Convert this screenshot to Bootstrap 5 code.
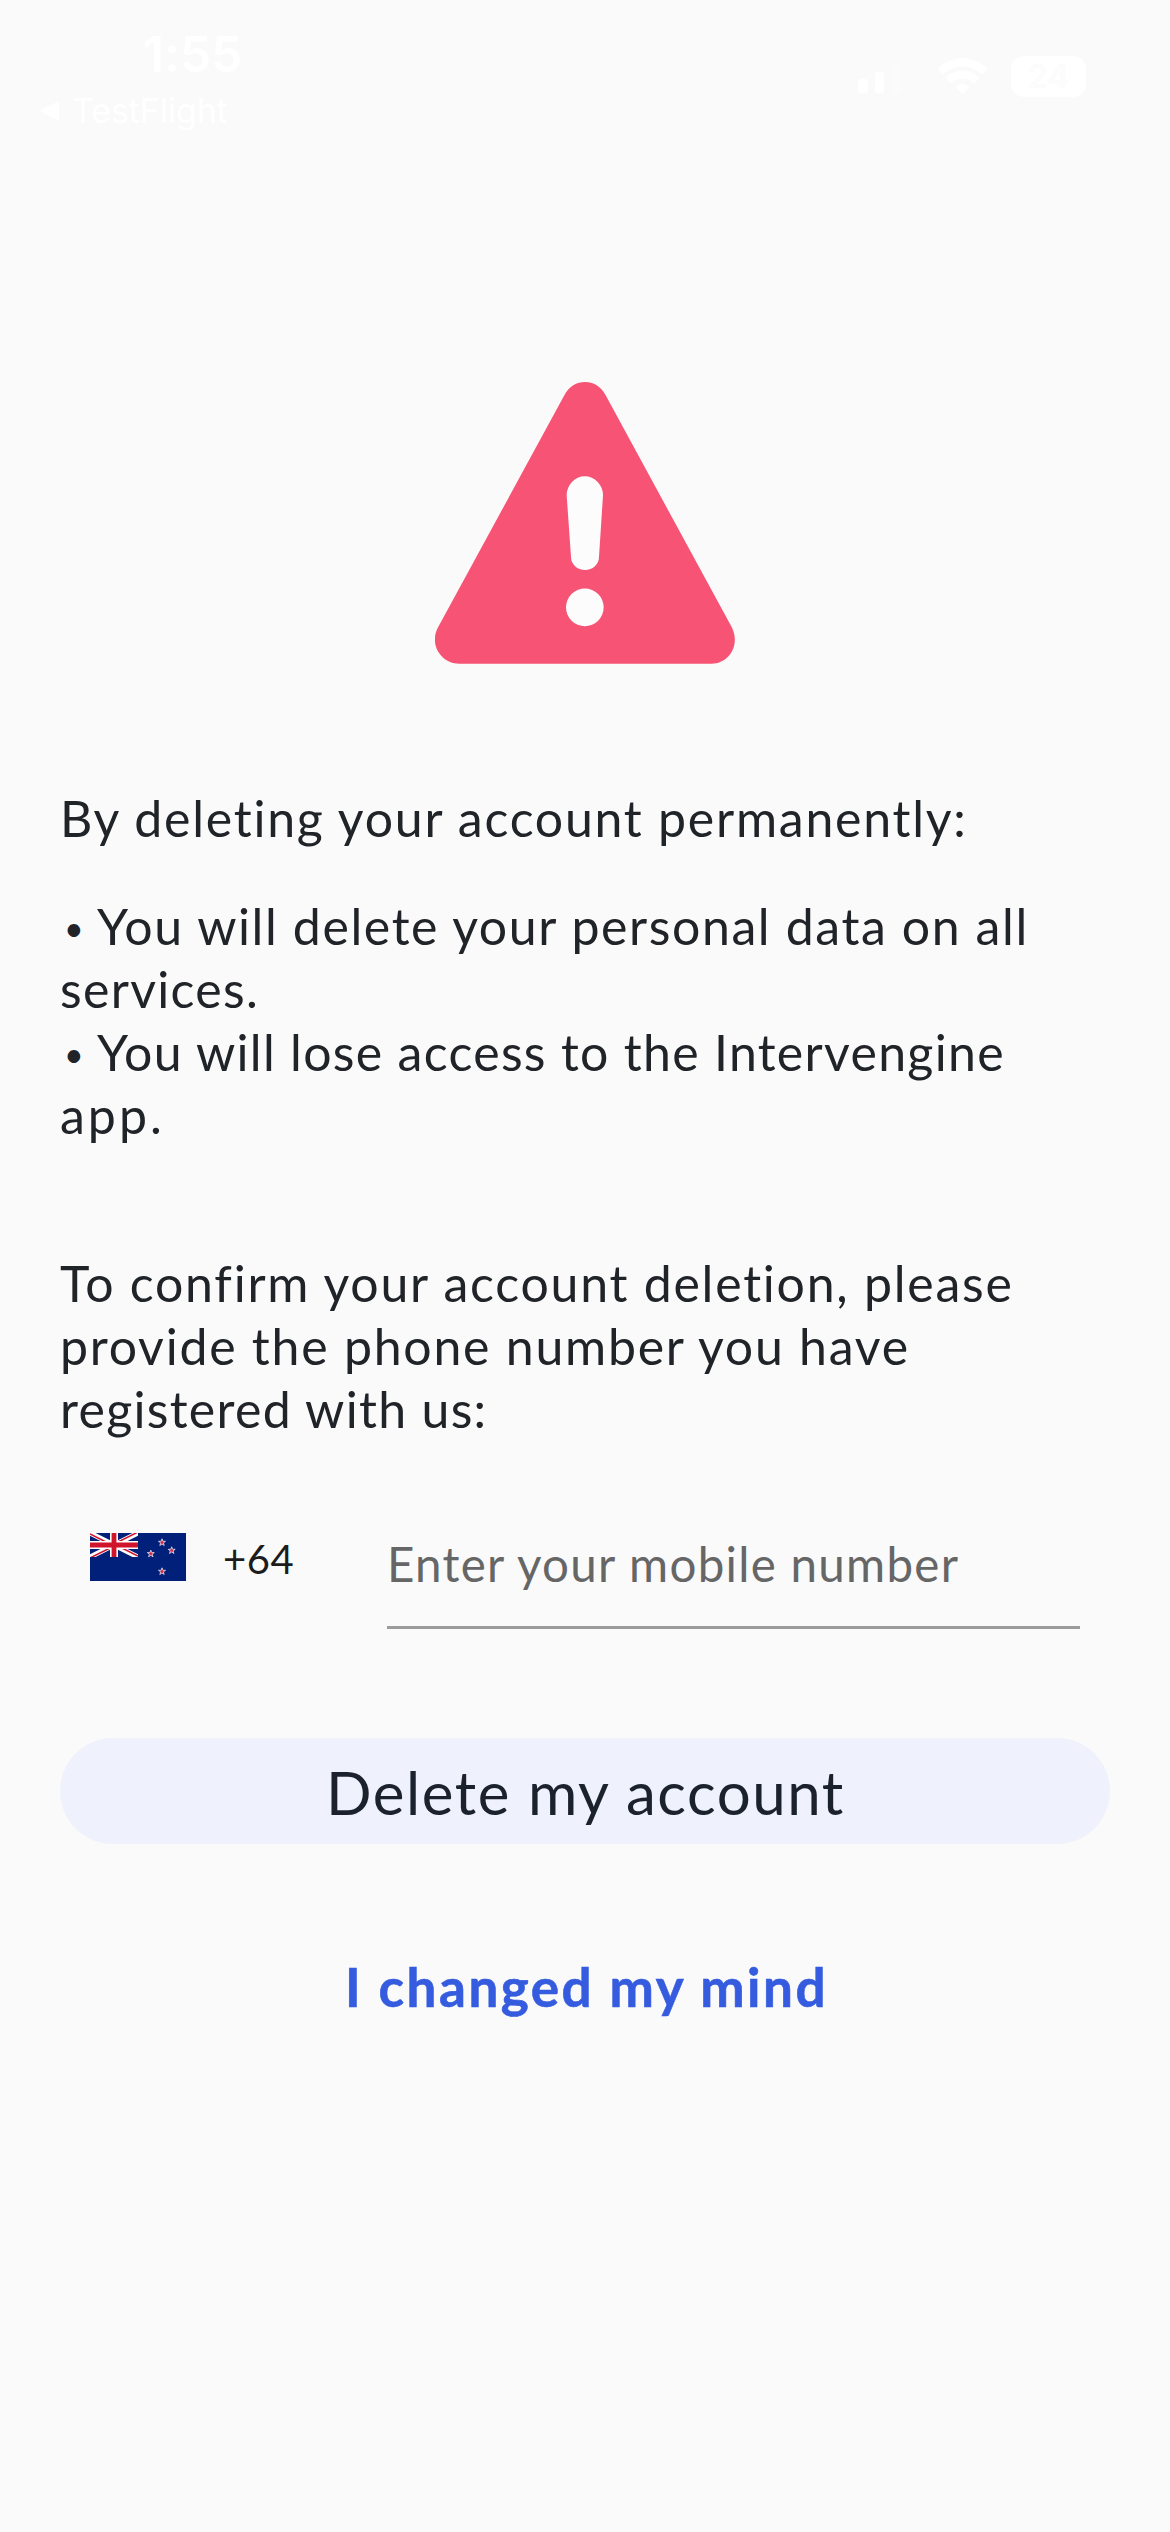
<!DOCTYPE html>
<html lang="en">
<head>
<meta charset="utf-8">
<meta name="viewport" content="width=device-width, initial-scale=1">
<title>Delete account</title>
<link rel="stylesheet" href="https://cdn.jsdelivr.net/npm/bootstrap@5.3.0/dist/css/bootstrap.min.css">
<style>
  body { background: #fafafa; color: #202428; font-family: Lato, "Open Sans", sans-serif; }
  .screen { width: 1170px; height: 2532px; overflow: hidden; }
  .status-bar { height: 382px; padding: 24px 84px 0 40px; color: #fff; font-family: Inter, "Liberation Sans", sans-serif; }
  .clock { font-size: 50px; line-height: 60px; font-weight: 600; letter-spacing: -.2px; padding-left: 103px; }
  .back-link { font-size: 34px; line-height: 42px; font-weight: 400; letter-spacing: -.1px; gap: 12px; margin-top: 6px; }
  .status-icons { padding-top: 32px; }
  .battery { width: 75px; height: 41px; border-radius: 13px; background: #fff; color: #fcfcfc; font-size: 32px; line-height: 41px; font-weight: 700; margin-left: 23px; }
  .content { padding: 0 60px; }
  .copy { font-size: 50px; line-height: 63px; }
  .copy > span { display: block; white-space: nowrap; }
  .bullet { display: inline-block; width: 37px; padding-left: 4px; font-size: 34px; line-height: 50px; letter-spacing: 0; vertical-align: 4px; }
  .intro { margin-top: 123px; }
  .effects { margin-top: 45px; }
  .confirm { margin-top: 105px; }
  .ls-a { letter-spacing: 1.75px; }
  .ls-b { letter-spacing: 1.6px; }
  .ls-c { letter-spacing: 1.3px; }
  .ls-d { letter-spacing: 3px; }
  .phone-row { margin-top: 92px; padding: 0 30px; }
  .dial { width: 297px; height: 48px; gap: 37px; font-size: 40px; line-height: 48px; letter-spacing: .6px; color: #1c1c1c; }
  .dial b { font-weight: 400; padding-top: 4px; }
  .phone-row .phone-input { border: 0; border-bottom: 3px solid #9b9b9b; border-radius: 0; background: transparent; padding: 2px 0 34px; height: 96px; font-size: 47.5px; line-height: 57px; letter-spacing: 1.29px; }
  .phone-input::placeholder { color: #666; opacity: 1; }
  .btn-delete { --bs-btn-bg: #eff1fc; --bs-btn-color: #1b212d; --bs-btn-border-width: 0; height: 106px; margin-top: 109px; padding: 1px 0 0 1px; font-size: 60px; line-height: 72px; letter-spacing: 1.55px; }
  .btn-keep { --bs-btn-color: #355cdf; --bs-btn-border-width: 0; margin-top: 111px; padding: 0 0 0 3px; font-size: 53px; line-height: 64px; font-weight: 700; letter-spacing: 2.5px; text-decoration: none; -webkit-text-stroke: .6px #355cdf; }
</style>
</head>
<body>
<main class="screen d-flex flex-column">
  <header class="status-bar d-flex justify-content-between align-items-start">
    <div>
      <div class="clock">1:55</div>
      <div class="back-link d-flex align-items-center">
        <svg width="20" height="20" viewBox="0 0 20 20" fill="#fff" aria-hidden="true"><path d="M19 2v16q0 2-2 1L1 11q-1-1 0-2L17 1q2-1 2 1z"/></svg>
        <span>TestFlight</span>
      </div>
    </div>
    <div class="status-icons d-flex align-items-center">
      <svg width="56" height="36" viewBox="0 0 56 36" fill="#fff" aria-hidden="true"><rect x="1" y="20" width="10" height="14" rx="3"/><rect x="18" y="13" width="9" height="21" rx="3"/><rect x="35" y="7" width="9" height="27" rx="3" opacity=".2"/><rect x="47" y="0" width="9" height="34" rx="3" opacity=".15"/></svg>
      <svg class="ms-4" width="51" height="37" viewBox="0 0 51 37" fill="none" stroke="#fff" stroke-width="8" aria-hidden="true"><path d="M3 13.500Q25.500-5 48 13.500M11 22.500Q25.500 10.500 40 22.500"/><path d="M25.500 36l-7-7q7-6 14 0z" fill="#fff" stroke="none"/></svg>
      <div class="battery text-center">24</div>
    </div>
  </header>

  <section class="content d-flex flex-column">
    <svg class="d-block mx-auto" width="300" height="282" viewBox="0 0 900 846" role="img" aria-label="Warning">
      <path fill="#f65375" d="M388 40C414-13 486-13 512 40L890 735C918 790 880 845 830 845H72C20 845-18 790 8 738z"/>
      <path fill="#fcfcfc" d="M395 340a54.500 57 0 0 1 109 0L492 525a42 39 0 0 1-84 0z"/>
      <circle fill="#fcfcfc" cx="449.500" cy="676" r="56.500"/>
    </svg>

    <p class="copy intro mb-0"><span class="ls-a">By deleting your account permanently:</span></p>
    <p class="copy effects mb-0">
      <span class="ls-b"><i class="bullet fst-normal">•</i>You will delete your personal data on all</span>
      <span class="ls-c">services.</span>
      <span class="ls-c"><i class="bullet fst-normal">•</i>You will lose access to the Intervengine</span>
      <span class="ls-d">app.</span>
    </p>
    <p class="copy confirm mb-0">
      <span class="ls-a">To confirm your account deletion, please</span>
      <span class="ls-a">provide the phone number you have</span>
      <span class="ls-c">registered with us:</span>
    </p>

    <div class="phone-row d-flex align-items-start">
      <div class="dial d-flex align-items-center flex-shrink-0">
        <svg width="96" height="48" viewBox="0 0 96 48" role="img" aria-label="New Zealand">
          <defs>
            <clipPath id="canton"><path d="M0 0h48v24H0z"/></clipPath>
            <path id="star" d="M0-3.700L.9-1.200H3.500L1.400.4 2.200 3 0 1.500-2.200 3-1.400.4-3.500-1.200H-.9z" fill="#d52442" stroke="#e5e3ee" stroke-width=".8"/>
          </defs>
          <path fill="#00207a" d="M0 0h96v48H0z"/>
          <g clip-path="url(#canton)" fill="none">
            <path d="M0 0l48 24M48 0L0 24" stroke="#fff" stroke-width="5"/>
            <path d="M0 1l22 11M48 23L26 12M48-1L24 11M0 25l24-12" stroke="#cf142b" stroke-width="1.500"/>
            <path d="M24 0v24M0 12h48" stroke="#fff" stroke-width="8"/>
            <path d="M24 0v24M0 12h48" stroke="#cf142b" stroke-width="4.800"/>
          </g>
          <use href="#star" x="72" y="9.500"/><use href="#star" x="60.800" y="20.800"/><use href="#star" x="81.700" y="17.500"/><use href="#star" x="72" y="38.500"/>
        </svg>
        <b>+64</b>
      </div>
      <input class="form-control phone-input" type="tel" placeholder="Enter your mobile number" aria-label="Mobile number">
    </div>

    <button type="button" class="btn btn-delete rounded-pill w-100 mx-auto">Delete my account</button>
    <button type="button" class="btn btn-link btn-keep mx-auto">I changed my mind</button>
  </section>
</main>
<script src="https://cdn.jsdelivr.net/npm/bootstrap@5.3.0/dist/js/bootstrap.bundle.min.js"></script>
</body>
</html>
